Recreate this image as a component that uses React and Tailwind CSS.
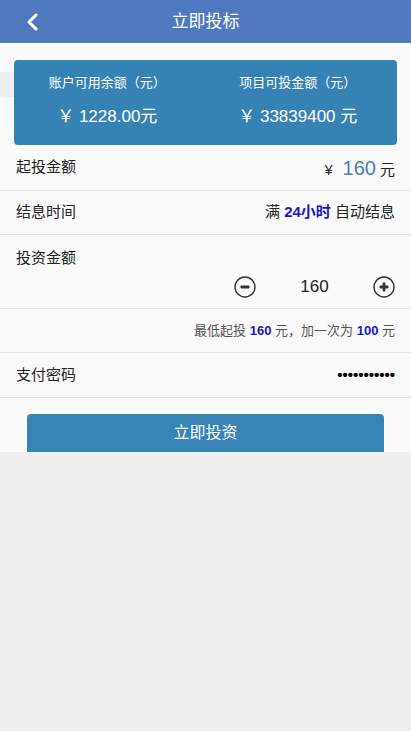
import React from "react";

const font = { fontFamily: '"Microsoft YaHei", "Liberation Sans", "Noto Sans CJK SC", sans-serif' };

function Circle({ plus }) {
  return (
    <svg width="22" height="22" viewBox="0 0 22 22">
      <circle cx="11" cy="11" r="10" fill="none" stroke="#333" strokeWidth="1.4" />
      <rect x="6.5" y="9.6" width="9" height="2.8" rx="0.8" fill="#333" />
      {plus && <rect x="9.6" y="6.5" width="2.8" height="9" rx="0.8" fill="#333" />}
    </svg>
  );
}

export default function App() {
  return (
    <div className="min-h-[731px] bg-[#f0f0f0] text-[#222]" style={font}>
      <div className="h-[43px] bg-[#4f78be] flex items-center relative">
        <svg className="absolute left-[26px] top-[13px]" width="12" height="18" viewBox="0 0 12 18">
          <path d="M10 2 L3 9 L10 16" fill="none" stroke="#fff" strokeWidth="3" strokeLinecap="round" strokeLinejoin="round" />
        </svg>
        <div className="flex-1 text-center text-white text-[17px]">立即投标</div>
      </div>
      <div className="bg-[#fafafa]">
        <div className="pt-[17px] px-[14px] relative">
          <div className="absolute left-0 top-[29px] w-[20px] h-[25px] bg-[#f0f0f0]" />
          <div className="relative bg-[#3682b5] rounded-[4px] h-[85px] flex text-white">
            <div className="flex-1 flex flex-col items-center pt-[15px] pr-[4px]">
              <div className="text-[13px] leading-[16px]">账户可用余额（元）</div>
              <div className="text-[17px] mt-[16px] leading-[20px]">￥ 1228.00元</div>
            </div>
            <div className="flex-1 flex flex-col items-center pt-[15px] pr-[6px]">
              <div className="text-[13px] leading-[16px]">项目可投金额（元）</div>
              <div className="text-[17px] mt-[16px] leading-[20px]">￥ 33839400 元</div>
            </div>
          </div>
        </div>
        <div className="h-[46px] flex items-center justify-between text-[15px] px-[16px] border-b border-[#e3e3e3]">
          <span>起投金额</span>
          <span className="flex items-baseline">
            <span className="text-[14px] mr-[10px]">¥</span>
            <span className="text-[20px] text-[#4a7eb3]">160</span>
            <span className="ml-[4px]">元</span>
          </span>
        </div>
        <div className="h-[44px] flex items-center justify-between text-[15px] px-[16px] border-b border-[#e3e3e3]">
          <span>结息时间</span>
          <span>
            满 <b className="text-[#1616c8]">24小时</b> 自动结息
          </span>
        </div>
        <div className="h-[74px] px-[16px] border-b border-[#e3e3e3] text-[15px]">
          <div className="pt-[13px] leading-[20px]">投资金额</div>
          <div className="flex items-center justify-end mt-[6px]">
            <Circle />
            <span className="w-[117px] text-center text-[17px]">160</span>
            <Circle plus />
          </div>
        </div>
        <div className="h-[44px] flex items-center justify-end px-[16px] border-b border-[#e3e3e3] text-[13px] text-[#555]">
          最低起投&nbsp;<b className="text-[#1616c8]">160</b>&nbsp;元，加一次为&nbsp;<b className="text-[#1616c8]">100</b>&nbsp;元
        </div>
        <div className="h-[45px] flex items-center justify-between px-[16px] border-b border-[#e3e3e3] text-[15px]">
          <span>支付密码</span>
          <span className="text-[15px] font-bold text-black">•••••••••••</span>
        </div>
        <div className="pt-[16px] px-[27px]">
          <div className="h-[38px] bg-[#3984b6] rounded-t-[4px] flex items-center justify-center text-white text-[16px]">
            立即投资
          </div>
        </div>
      </div>
    </div>
  );
}
